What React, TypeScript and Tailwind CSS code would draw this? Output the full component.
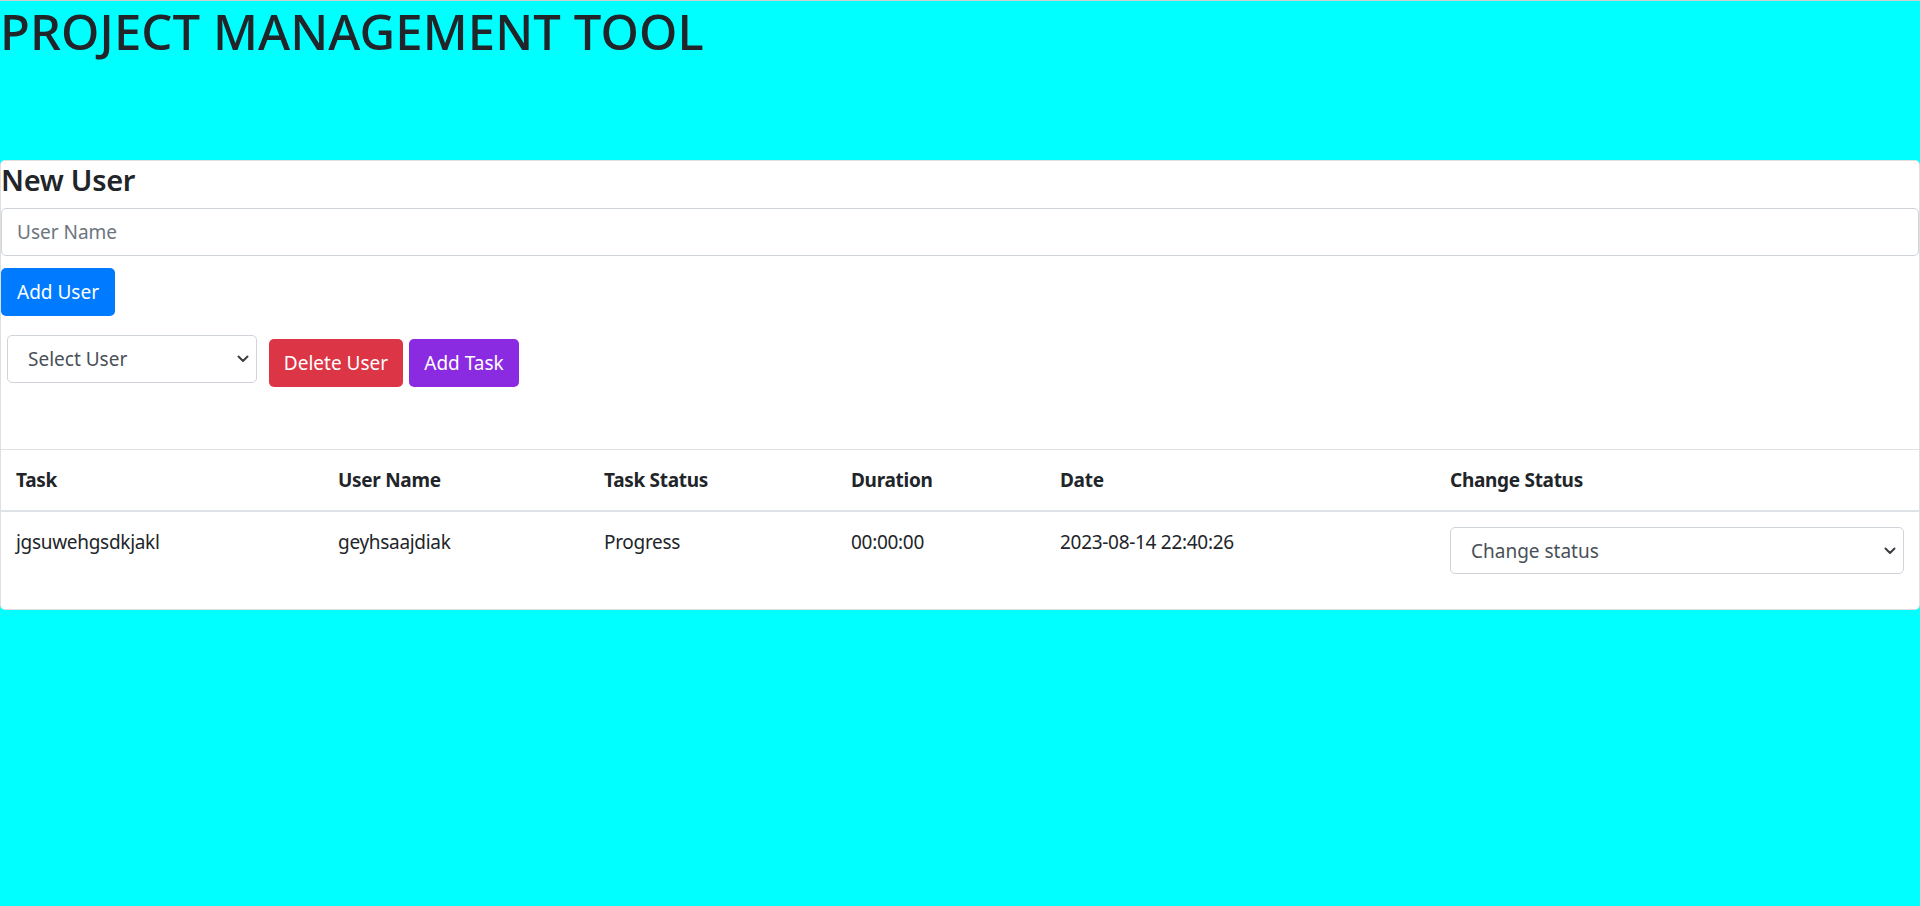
import React from "react";

const Chevron = () => (
  <svg width="12" height="8" viewBox="0 0 12 8" className="pointer-events-none absolute right-[8px] top-1/2 -translate-y-1/2">
    <path d="M1.5 1.5 L6 6 L10.5 1.5" fill="none" stroke="#3a3f44" strokeWidth="2" strokeLinecap="round" strokeLinejoin="round" />
  </svg>
);

export default function App() {
  return (
    <div
      className="min-h-[906px] bg-[#00ffff] border-t border-[#cfcfcf] text-[#212529]"
      style={{ fontFamily: '"Noto Sans", "Open Sans", sans-serif' }}
    >
      <h1 className="m-0 text-[49px] leading-[60px] font-medium tracking-[0.1px]">PROJECT MANAGEMENT TOOL</h1>

      <div className="mt-[99px] bg-white border border-black/[0.125] rounded-[5px] h-[450px]">
        <h4 className="m-0 text-[29px] leading-[37px] font-semibold tracking-[-0.3px] mb-[10px]">New User</h4>
        <input
          className="block w-full h-[48px] px-[15px] border border-[#ced4da] rounded-[5px] text-[19px] text-[#495057] placeholder:text-[#6c757d] outline-none"
          placeholder="User Name"
        />
        <button className="mt-[12px] h-[48px] w-[114px] bg-[#007bff] text-white text-[19px] rounded-[5px] leading-none">
          Add User
        </button>
        <div className="flex items-start mt-[19px]">
          <div className="relative ml-[6px] w-[250px] h-[48px]">
            <select className="appearance-none w-full h-full border border-[#ced4da] rounded-[5px] pl-[20px] pr-[30px] text-[19px] text-[#495057] bg-white outline-none">
              <option>Select User</option>
            </select>
            <Chevron />
          </div>
          <button className="ml-[12px] mt-[4px] h-[48px] w-[134px] bg-[#dc3545] text-white text-[19px] rounded-[5px] leading-none">
            Delete User
          </button>
          <button className="ml-[6px] mt-[4px] h-[48px] w-[110px] bg-[#8a2be2] text-white text-[19px] rounded-[5px] leading-none">
            Add Task
          </button>
        </div>

        <table className="mt-[62px] w-full border-collapse text-[19px] leading-[30px] table-fixed">
          <colgroup>
            <col className="w-[322px]" />
            <col className="w-[266px]" />
            <col className="w-[247px]" />
            <col className="w-[209px]" />
            <col className="w-[390px]" />
            <col />
          </colgroup>
          <thead>
            <tr className="border-t border-[#dee2e6] border-b-2">
              <th className="text-left font-bold p-[15px] tracking-[-0.3px]">Task</th>
              <th className="text-left font-bold p-[15px] tracking-[-0.3px]">User Name</th>
              <th className="text-left font-bold p-[15px] tracking-[-0.3px]">Task Status</th>
              <th className="text-left font-bold p-[15px] tracking-[-0.3px]">Duration</th>
              <th className="text-left font-bold p-[15px] tracking-[-0.3px]">Date</th>
              <th className="text-left font-bold p-[15px] tracking-[-0.3px]">Change Status</th>
            </tr>
          </thead>
          <tbody>
            <tr>
              <td className="align-top p-[15px] tracking-[-0.3px]">jgsuwehgsdkjakl</td>
              <td className="align-top p-[15px] tracking-[-0.3px]">geyhsaajdiak</td>
              <td className="align-top p-[15px] tracking-[-0.3px]">Progress</td>
              <td className="align-top p-[15px] tracking-[-0.3px]">00:00:00</td>
              <td className="align-top p-[15px] tracking-[-0.3px]">2023-08-14 22:40:26</td>
              <td className="align-top py-[15px] pl-[15px] pr-[15px]">
                <div className="relative w-full h-[47px]">
                  <select className="appearance-none w-full h-full border border-[#ced4da] rounded-[5px] pl-[20px] pr-[30px] text-[19px] text-[#495057] bg-white outline-none">
                    <option>Change status</option>
                  </select>
                  <Chevron />
                </div>
              </td>
            </tr>
          </tbody>
        </table>
      </div>
    </div>
  );
}
